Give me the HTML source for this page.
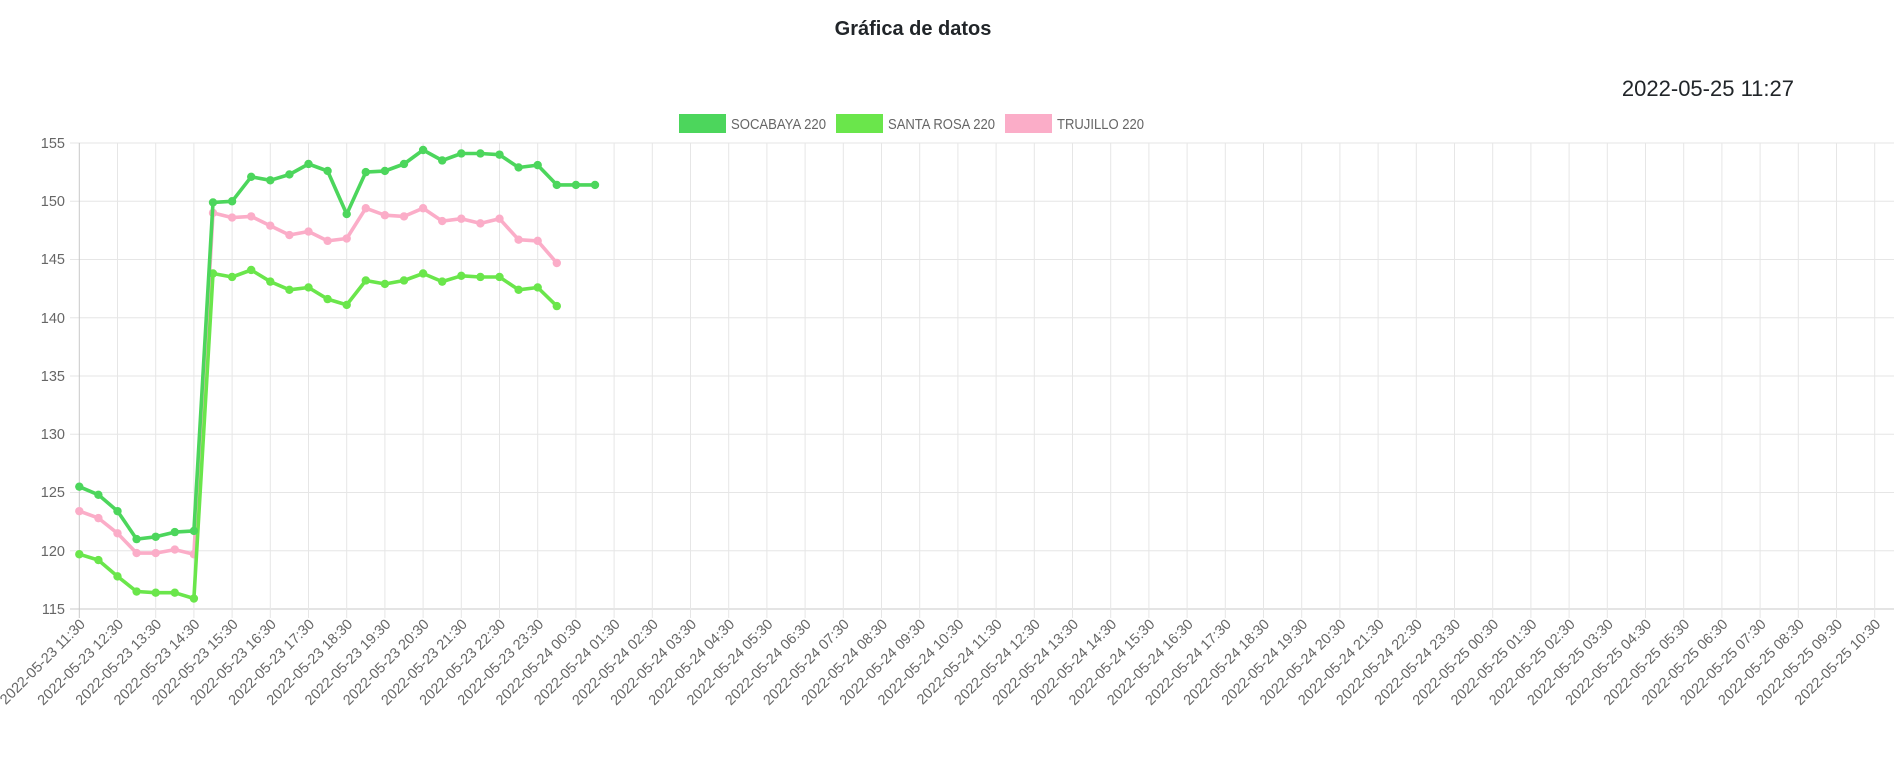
<!DOCTYPE html>
<html><head><meta charset="utf-8"><style>
html,body{margin:0;padding:0;background:#fff;width:1902px;height:760px;overflow:hidden}
.t{position:absolute;left:0;width:1826px;top:18px;text-align:center;font:bold 20px "Liberation Sans",sans-serif;color:#212529}
.d{position:absolute;right:108px;top:76px;font:22px "Liberation Sans",sans-serif;color:#212529}
svg{position:absolute;left:0;top:0}
svg text{font-family:"Liberation Sans",sans-serif;font-size:14.5px;fill:#666}
</style></head><body>
<div class="t">Gráfica de datos</div>
<div class="d">2022-05-25 11:27</div>
<svg width="1902" height="760" id="s">
<g id="grid"></g>
<rect x="679" y="114" width="47" height="19" fill="#4cd65c"/><text x="731" y="129" textLength="95" lengthAdjust="spacingAndGlyphs">SOCABAYA 220</text>
<rect x="836" y="114" width="47" height="19" fill="#6ae64b"/><text x="888" y="129" textLength="107" lengthAdjust="spacingAndGlyphs">SANTA ROSA 220</text>
<rect x="1005" y="114" width="47" height="19" fill="#fbadc8"/><text x="1057" y="129" textLength="87" lengthAdjust="spacingAndGlyphs">TRUJILLO 220</text>
<g text-anchor="end">
<text x="65" y="148">155</text><text x="65" y="206">150</text><text x="65" y="264">145</text>
<text x="65" y="323">140</text><text x="65" y="381">135</text><text x="65" y="439">130</text>
<text x="65" y="497">125</text><text x="65" y="556">120</text><text x="65" y="614">115</text>
</g>
<g text-anchor="end" id="xl">
<text transform="translate(86,625) rotate(-45)">2022-05-23 11:30</text>
<text transform="translate(124.2,625) rotate(-45)">2022-05-23 12:30</text>
<text transform="translate(162.4,625) rotate(-45)">2022-05-23 13:30</text>
<text transform="translate(200.6,625) rotate(-45)">2022-05-23 14:30</text>
<text transform="translate(238.8,625) rotate(-45)">2022-05-23 15:30</text>
<text transform="translate(277,625) rotate(-45)">2022-05-23 16:30</text>
<text transform="translate(315.2,625) rotate(-45)">2022-05-23 17:30</text>
<text transform="translate(353.4,625) rotate(-45)">2022-05-23 18:30</text>
<text transform="translate(391.6,625) rotate(-45)">2022-05-23 19:30</text>
<text transform="translate(429.8,625) rotate(-45)">2022-05-23 20:30</text>
<text transform="translate(468,625) rotate(-45)">2022-05-23 21:30</text>
<text transform="translate(506.2,625) rotate(-45)">2022-05-23 22:30</text>
<text transform="translate(544.4,625) rotate(-45)">2022-05-23 23:30</text>
<text transform="translate(582.6,625) rotate(-45)">2022-05-24 00:30</text>
<text transform="translate(620.8,625) rotate(-45)">2022-05-24 01:30</text>
<text transform="translate(659,625) rotate(-45)">2022-05-24 02:30</text>
<text transform="translate(697.2,625) rotate(-45)">2022-05-24 03:30</text>
<text transform="translate(735.4,625) rotate(-45)">2022-05-24 04:30</text>
<text transform="translate(773.6,625) rotate(-45)">2022-05-24 05:30</text>
<text transform="translate(811.8,625) rotate(-45)">2022-05-24 06:30</text>
<text transform="translate(850,625) rotate(-45)">2022-05-24 07:30</text>
<text transform="translate(888.2,625) rotate(-45)">2022-05-24 08:30</text>
<text transform="translate(926.4,625) rotate(-45)">2022-05-24 09:30</text>
<text transform="translate(964.6,625) rotate(-45)">2022-05-24 10:30</text>
<text transform="translate(1002.8,625) rotate(-45)">2022-05-24 11:30</text>
<text transform="translate(1041,625) rotate(-45)">2022-05-24 12:30</text>
<text transform="translate(1079.2,625) rotate(-45)">2022-05-24 13:30</text>
<text transform="translate(1117.4,625) rotate(-45)">2022-05-24 14:30</text>
<text transform="translate(1155.6,625) rotate(-45)">2022-05-24 15:30</text>
<text transform="translate(1193.8,625) rotate(-45)">2022-05-24 16:30</text>
<text transform="translate(1232,625) rotate(-45)">2022-05-24 17:30</text>
<text transform="translate(1270.2,625) rotate(-45)">2022-05-24 18:30</text>
<text transform="translate(1308.4,625) rotate(-45)">2022-05-24 19:30</text>
<text transform="translate(1346.6,625) rotate(-45)">2022-05-24 20:30</text>
<text transform="translate(1384.8,625) rotate(-45)">2022-05-24 21:30</text>
<text transform="translate(1423,625) rotate(-45)">2022-05-24 22:30</text>
<text transform="translate(1461.2,625) rotate(-45)">2022-05-24 23:30</text>
<text transform="translate(1499.4,625) rotate(-45)">2022-05-25 00:30</text>
<text transform="translate(1537.6,625) rotate(-45)">2022-05-25 01:30</text>
<text transform="translate(1575.8,625) rotate(-45)">2022-05-25 02:30</text>
<text transform="translate(1614,625) rotate(-45)">2022-05-25 03:30</text>
<text transform="translate(1652.2,625) rotate(-45)">2022-05-25 04:30</text>
<text transform="translate(1690.4,625) rotate(-45)">2022-05-25 05:30</text>
<text transform="translate(1728.6,625) rotate(-45)">2022-05-25 06:30</text>
<text transform="translate(1766.8,625) rotate(-45)">2022-05-25 07:30</text>
<text transform="translate(1805,625) rotate(-45)">2022-05-25 08:30</text>
<text transform="translate(1843.2,625) rotate(-45)">2022-05-25 09:30</text>
<text transform="translate(1881.4,625) rotate(-45)">2022-05-25 10:30</text>
</g>
<g id="data"></g>
</svg>
<script>
var NS="http://www.w3.org/2000/svg",g=document.getElementById('grid'),dg=document.getElementById('data');
function el(p,n,a){var e=document.createElementNS(NS,n);for(var k in a)e.setAttribute(k,a[k]);p.appendChild(e);return e;}
var L=79.3,R=1894,T=143,B=609,st=19.1;
for(var k=0;k<9;k++){var y=T+k*58.25;el(g,'line',{x1:70,x2:R,y1:y,y2:y,stroke:k==8?'#c8c8c8':'#e6e6e6','stroke-width':1});}
for(var i=0;i<48;i++){var x=L+i*38.2;el(g,'line',{x1:x,x2:x,y1:T,y2:B+9,stroke:i==0?'#c8c8c8':'#e6e6e6','stroke-width':1});}
function Y(v){return T+(155-v)*11.65;}
var ds=[
['#fbadc8',[123.4,122.8,121.5,119.8,119.8,120.1,119.7,149.0,148.6,148.7,147.9,147.1,147.4,146.6,146.8,149.4,148.8,148.7,149.4,148.3,148.5,148.1,148.5,146.7,146.6,144.7]],
['#6ae64b',[119.7,119.2,117.8,116.5,116.4,116.4,115.9,143.8,143.5,144.1,143.1,142.4,142.6,141.6,141.1,143.2,142.9,143.2,143.8,143.1,143.6,143.5,143.5,142.4,142.6,141.0]],
['#4cd65c',[125.5,124.8,123.4,121.0,121.2,121.6,121.7,149.9,150.0,152.1,151.8,152.3,153.2,152.6,148.9,152.5,152.6,153.2,154.4,153.5,154.1,154.1,154.0,152.9,153.1,151.4,151.4,151.4]]];
ds.forEach(function(d){var pts=d[1].map(function(v,i){return (L+i*st).toFixed(1)+','+Y(v).toFixed(1)}).join(' ');
el(dg,'polyline',{points:pts,fill:'none',stroke:d[0],'stroke-width':3.6,'stroke-linejoin':'round'});
d[1].forEach(function(v,i){el(dg,'circle',{cx:L+i*st,cy:Y(v),r:4.2,fill:d[0]});});});
</script>
</body></html>
